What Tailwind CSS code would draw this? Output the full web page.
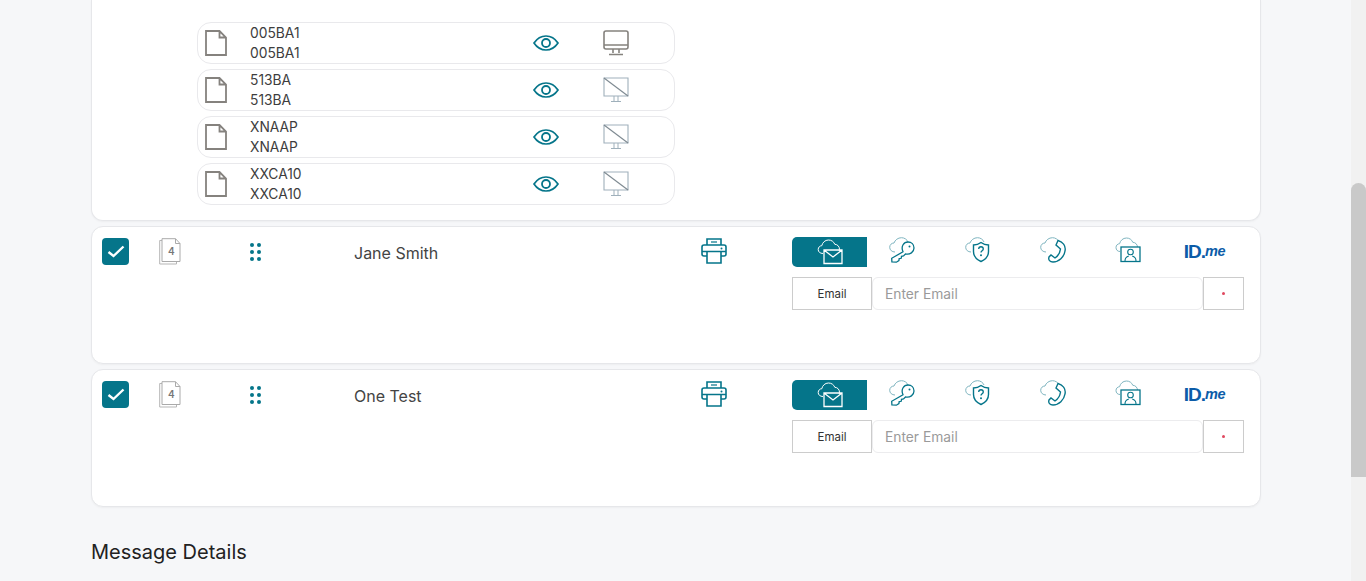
<!DOCTYPE html>
<html lang="en">
<head>
    <meta charset="UTF-8">
    <meta name="viewport" content="width=device-width, initial-scale=1.0">
    <title>Recipients</title>
    <script src="https://cdn.jsdelivr.net/npm/@tailwindcss/browser@4"></script>
</head>

<body class="h-[581px] overflow-hidden bg-[#f6f7f9] font-['Inter',sans-serif] text-[#333]">

    <svg class="hidden" xmlns="http://www.w3.org/2000/svg">
        <symbol id="file" viewBox="0 0 22 26">
            <path d="M1 1h13.500L21 7.500V25H1z M14.500 1v6.500H21" fill="none" stroke="#85827e" stroke-width="1.800"/>
        </symbol>
        <symbol id="eye" viewBox="0 0 26 16">
            <path d="M1 8C4 3.500 8 1 13 1s9 2.500 12 7c-3 4.500-7 7-12 7S4 12.500 1 8z" fill="none" stroke="#05758a" stroke-width="1.700"/>
            <circle cx="13" cy="8" r="4" fill="none" stroke="#05758a" stroke-width="1.800"/>
        </symbol>
        <symbol id="monitor" viewBox="0 0 26 26">
            <rect x="1" y="1" width="24" height="18" rx="2" fill="none" stroke="#85827e" stroke-width="1.600"/>
            <path d="M1 15h24M10 19v4M16 19v4M6 24.500h14" fill="none" stroke="#85827e" stroke-width="1.600"/>
        </symbol>
        <symbol id="monitor-off" viewBox="0 0 26 26">
            <path d="M1 1h24v18H1z" fill="none" stroke="#9fb0bb" stroke-width="1.100"/>
            <path d="M1 1l24 18" fill="none" stroke="#7f8a92" stroke-width="1.200"/>
            <path d="M11 19v5M15 19v5M8 24.500h10" fill="none" stroke="#9fb0bb" stroke-width="1"/>
        </symbol>
        <symbol id="pages" viewBox="0 0 22 27">
            <path d="M3 2.500H.700V26H17.500V24" fill="none" stroke="#b5b5b5" stroke-width="1"/>
            <path d="M3 .700h13.500L21 5.500V23.500H3z M16.500 .700V5.500H21" fill="#fff" stroke="#aaaaaa" stroke-width="1"/>
        </symbol>
        <symbol id="printer" viewBox="0 0 26 26">
            <path d="M6 7V1h14v6M6 18H3a2 2 0 0 1-2-2V9a2 2 0 0 1 2-2h20a2 2 0 0 1 2 2v7a2 2 0 0 1-2 2h-3M6 13.500h14V25H6zM1 13.500h24" fill="none" stroke="#05758a" stroke-width="1.600"/>
            <circle cx="20.500" cy="10.500" r="1" fill="#05758a"/>
            <path d="M10 4h6" stroke="#05758a" stroke-width="1.200"/>
        </symbol>
        <symbol id="cloud-mail" viewBox="0 0 26 26">
            <path d="M6 14.500C3 14.500 1.200 12.800 1.200 10.500c0-2.200 1.700-3.800 3.600-3.800C5.500 3.500 8 1 11.500 1c3 0 5.300 1.700 6.300 4.300 2.500.1 4.700 2 4.700 5 0 .6-.1 1.200-.3 1.700" fill="none" stroke="currentColor" stroke-width="1"/>
            <path d="M7 11h18v13.500H7z M7 11l9 7 9-7" fill="#05758a" stroke="currentColor" stroke-width="1.300"/>
        </symbol>
        <symbol id="cloud-key" viewBox="0 0 26 26">
            <path d="M6 15C3 15 .7 13 .7 10.300.7 7.800 2.600 6 5 6 6 3 9 .7 12.500.7c3 0 5.500 1.800 6.500 4.300" fill="none" stroke="#7fb5c0" stroke-width="1"/>
            <path d="M14 14.800C11.500 9 15 5 19 5c3.500 0 6 2.500 6 6 0 4-4 7-8.500 6L14.500 19l-2 .3-.3 2-2 .3-.3 2-2.500 1.600-4.500-.4-.2-3.500z" fill="#fff" stroke="currentColor" stroke-width="1.300"/>
            <circle cx="20.500" cy="9.500" r="1" fill="currentColor"/>
        </symbol>
        <symbol id="cloud-shield" viewBox="0 0 26 26">
            <path d="M6 15C3 15 .7 13 .7 10.300.7 7.800 2.600 6 5 6 6 3 9 .7 12.500.7c3 0 5.500 1.800 6.500 4.300" fill="none" stroke="#7fb5c0" stroke-width="1"/>
            <path d="M16 5.500c2 1.500 4.500 2.500 7.500 2.500v6.500c0 4.500-3 8-7.500 10-4.500-2-7.500-5.500-7.500-10V8c3 0 5.500-1 7.500-2.500z" fill="#fff" stroke="currentColor" stroke-width="1.400"/>
            <path d="M13.700 12c0-3 4.600-3 4.600 0 0 1.800-2.300 1.800-2.300 3.500" fill="none" stroke="currentColor" stroke-width="1.300"/>
            <circle cx="16" cy="18.300" r="1" fill="currentColor"/>
        </symbol>
        <symbol id="cloud-phone" viewBox="0 0 26 26">
            <path d="M6 15C3 15 .7 13 .7 10.300.7 7.800 2.600 6 5 6 6 3 9 .7 12.500.7c3 0 5.500 1.800 6.500 4.300" fill="none" stroke="#7fb5c0" stroke-width="1"/>
            <path d="M18 3.500C23 5 26 9 25 14c-1 6-6 11-12 11-3 0-5-2-4-5l2-2 4 3c3-2 5-5 5.500-9L16 8z" fill="#fff" stroke="currentColor" stroke-width="1.400"/>
        </symbol>
        <symbol id="cloud-person" viewBox="0 0 26 26">
            <path d="M5 14.500C2.500 14.500 1 12.800 1 10.500c0-2.200 1.700-3.800 3.600-3.800C5.300 3.500 8 1 11.500 1c3 0 5.300 1.700 6.300 4.300 2.500.1 4.700 2 4.700 5" fill="none" stroke="#7fb5c0" stroke-width="1"/>
            <rect x="6" y="10" width="19" height="14.500" fill="#fff" stroke="currentColor" stroke-width="1.300"/>
            <circle cx="15.500" cy="15" r="2.800" fill="none" stroke="currentColor" stroke-width="1.100"/>
            <path d="M10 24c0-3.500 2-4.500 3.800-5M21 24c0-3.500-2-4.500-3.800-5" fill="none" stroke="currentColor" stroke-width="1.100"/>
        </symbol>
    </svg>

    <div class="flex h-[581px]">
        <main class="w-[1351px] pl-[91px] pr-[90px]">

            <!-- open recipient, its top is scrolled away -->
            <section class="h-[221px] rounded-b-xl border-x border-b border-[#e6e7ea] bg-white pl-[105px] pt-[22px] shadow-[0_1px_2px_rgba(0,0,0,0.04)]">
                <div class="flex w-[478px] flex-col gap-[5px]">
                    <div class="flex h-[42px] items-center rounded-[14px] border border-[#e9e9ec] pl-[7px]">
                        <svg class="h-[26px] w-[22px]"><use href="#file"/></svg>
                        <div class="ml-[23px] w-[283px] text-[13.8px] leading-5 text-[#3d3d3d]"><p>005BA1</p><p>005BA1</p></div>
                        <svg class="h-4 w-[26px]"><use href="#eye"/></svg>
                        <svg class="ml-[44px] h-[26px] w-[26px]"><use href="#monitor"/></svg>
                    </div>
                    <div class="flex h-[42px] items-center rounded-[14px] border border-[#e9e9ec] pl-[7px]">
                        <svg class="h-[26px] w-[22px]"><use href="#file"/></svg>
                        <div class="ml-[23px] w-[283px] text-[13.8px] leading-5 text-[#3d3d3d]"><p>513BA</p><p>513BA</p></div>
                        <svg class="h-4 w-[26px]"><use href="#eye"/></svg>
                        <svg class="ml-[44px] h-[26px] w-[26px]"><use href="#monitor-off"/></svg>
                    </div>
                    <div class="flex h-[42px] items-center rounded-[14px] border border-[#e9e9ec] pl-[7px]">
                        <svg class="h-[26px] w-[22px]"><use href="#file"/></svg>
                        <div class="ml-[23px] w-[283px] text-[13.8px] leading-5 text-[#3d3d3d]"><p>XNAAP</p><p>XNAAP</p></div>
                        <svg class="h-4 w-[26px]"><use href="#eye"/></svg>
                        <svg class="ml-[44px] h-[26px] w-[26px]"><use href="#monitor-off"/></svg>
                    </div>
                    <div class="flex h-[42px] items-center rounded-[14px] border border-[#e9e9ec] pl-[7px]">
                        <svg class="h-[26px] w-[22px]"><use href="#file"/></svg>
                        <div class="ml-[23px] w-[283px] text-[13.8px] leading-5 text-[#3d3d3d]"><p>XXCA10</p><p>XXCA10</p></div>
                        <svg class="h-4 w-[26px]"><use href="#eye"/></svg>
                        <svg class="ml-[44px] h-[26px] w-[26px]"><use href="#monitor-off"/></svg>
                    </div>
                </div>
            </section>

            <section class="mt-[5px] flex h-[138px] rounded-xl border border-[#e6e7ea] bg-white pl-[10px] pt-[11px] shadow-[0_1px_2px_rgba(0,0,0,0.04)]">
                <span class="flex h-[27px] w-[27px] items-center justify-center rounded-[4px] bg-[#05758a]">
                    <svg class="h-[13px] w-[18px]" viewBox="0 0 18 13"><path d="M1.500 7 6.500 11 16.500 1.500" fill="none" stroke="#fff" stroke-width="2.400"/></svg>
                </span>
                <div class="relative ml-[31px] h-[27px] w-[22px] -translate-x-[1px]">
                    <svg class="h-[27px] w-[22px]"><use href="#pages"/></svg>
                    <span class="absolute left-[9px] top-[7px] text-[10px] leading-3 font-semibold text-[#777]">4</span>
                </div>
                <div class="ml-[68px] mt-[5px] grid h-[18px] w-[13px] grid-cols-2 content-between justify-between">
                    <i class="h-1 w-1 rounded-full bg-[#05758a]"></i><i class="h-1 w-1 rounded-full bg-[#05758a]"></i>
                    <i class="h-1 w-1 rounded-full bg-[#05758a]"></i><i class="h-1 w-1 rounded-full bg-[#05758a]"></i>
                    <i class="h-1 w-1 rounded-full bg-[#05758a]"></i><i class="h-1 w-1 rounded-full bg-[#05758a]"></i>
                </div>
                <p class="ml-[91px] mt-[5px] w-[347px] text-base leading-5 text-[#444]">Jane Smith</p>
                <svg class="h-[26px] w-[26px]"><use href="#printer"/></svg>
                <div class="ml-[65px] w-[452px] -mt-[1px]">
                    <div class="grid h-[30px] grid-cols-6 text-[#05758a]">
                        <span class="flex items-center justify-center rounded-l-[5px] bg-[#05758a] text-white"><svg class="h-[26px] w-[26px]"><use href="#cloud-mail"/></svg></span>
                        <span class="flex items-center justify-center pr-[6px]"><svg class="-mt-[4px] h-[26px] w-[26px]"><use href="#cloud-key"/></svg></span>
                        <span class="flex items-center justify-center pr-[5px]"><svg class="-mt-[4px] h-[26px] w-[26px]"><use href="#cloud-shield"/></svg></span>
                        <span class="flex items-center justify-center pr-[6px]"><svg class="-mt-[4px] h-[26px] w-[26px]"><use href="#cloud-phone"/></svg></span>
                        <span class="flex items-center justify-center pr-[5px]"><svg class="-mt-[4px] h-[26px] w-[26px]"><use href="#cloud-person"/></svg></span>
                        <span class="flex items-center justify-center pr-[4px] font-['Liberation_Sans',sans-serif] text-[#0b5ca8]"><b class="text-[19px] tracking-[-1px]">ID.</b><i class="text-[14.5px] font-bold tracking-[-0.5px]">me</i></span>
                    </div>
                    <div class="mt-[10px] flex h-[33px]">
                        <span class="flex w-[80px] items-center justify-center border border-[#cccccc] pt-[2px] text-[11.500px] text-[#333]">Email</span>
                        <span class="flex w-[331px] items-center rounded-md border border-[#ececee] pl-3 pt-[1px] text-[13.8px] text-[#9a9a9a]">Enter Email</span>
                        <span class="flex w-[41px] items-center justify-center border border-[#cccccc]"><i class="h-[3px] w-[3px] rounded-full bg-[#e0485f]"></i></span>
                    </div>
                </div>
            </section>

            <section class="mt-[5px] flex h-[138px] rounded-xl border border-[#e6e7ea] bg-white pl-[10px] pt-[11px] shadow-[0_1px_2px_rgba(0,0,0,0.04)]">
                <span class="flex h-[27px] w-[27px] items-center justify-center rounded-[4px] bg-[#05758a]">
                    <svg class="h-[13px] w-[18px]" viewBox="0 0 18 13"><path d="M1.500 7 6.500 11 16.500 1.500" fill="none" stroke="#fff" stroke-width="2.400"/></svg>
                </span>
                <div class="relative ml-[31px] h-[27px] w-[22px] -translate-x-[1px]">
                    <svg class="h-[27px] w-[22px]"><use href="#pages"/></svg>
                    <span class="absolute left-[9px] top-[7px] text-[10px] leading-3 font-semibold text-[#777]">4</span>
                </div>
                <div class="ml-[68px] mt-[5px] grid h-[18px] w-[13px] grid-cols-2 content-between justify-between">
                    <i class="h-1 w-1 rounded-full bg-[#05758a]"></i><i class="h-1 w-1 rounded-full bg-[#05758a]"></i>
                    <i class="h-1 w-1 rounded-full bg-[#05758a]"></i><i class="h-1 w-1 rounded-full bg-[#05758a]"></i>
                    <i class="h-1 w-1 rounded-full bg-[#05758a]"></i><i class="h-1 w-1 rounded-full bg-[#05758a]"></i>
                </div>
                <p class="ml-[91px] mt-[5px] w-[347px] text-base leading-5 text-[#444]">One Test</p>
                <svg class="h-[26px] w-[26px]"><use href="#printer"/></svg>
                <div class="ml-[65px] w-[452px] -mt-[1px]">
                    <div class="grid h-[30px] grid-cols-6 text-[#05758a]">
                        <span class="flex items-center justify-center rounded-l-[5px] bg-[#05758a] text-white"><svg class="h-[26px] w-[26px]"><use href="#cloud-mail"/></svg></span>
                        <span class="flex items-center justify-center pr-[6px]"><svg class="-mt-[4px] h-[26px] w-[26px]"><use href="#cloud-key"/></svg></span>
                        <span class="flex items-center justify-center pr-[5px]"><svg class="-mt-[4px] h-[26px] w-[26px]"><use href="#cloud-shield"/></svg></span>
                        <span class="flex items-center justify-center pr-[6px]"><svg class="-mt-[4px] h-[26px] w-[26px]"><use href="#cloud-phone"/></svg></span>
                        <span class="flex items-center justify-center pr-[5px]"><svg class="-mt-[4px] h-[26px] w-[26px]"><use href="#cloud-person"/></svg></span>
                        <span class="flex items-center justify-center pr-[4px] font-['Liberation_Sans',sans-serif] text-[#0b5ca8]"><b class="text-[19px] tracking-[-1px]">ID.</b><i class="text-[14.5px] font-bold tracking-[-0.5px]">me</i></span>
                    </div>
                    <div class="mt-[10px] flex h-[33px]">
                        <span class="flex w-[80px] items-center justify-center border border-[#cccccc] pt-[2px] text-[11.500px] text-[#333]">Email</span>
                        <span class="flex w-[331px] items-center rounded-md border border-[#ececee] pl-3 pt-[1px] text-[13.8px] text-[#9a9a9a]">Enter Email</span>
                        <span class="flex w-[41px] items-center justify-center border border-[#cccccc]"><i class="h-[3px] w-[3px] rounded-full bg-[#e0485f]"></i></span>
                    </div>
                </div>
            </section>

            <h2 class="mt-[33px] text-xl leading-6 text-[#222]">Message Details</h2>
        </main>

        <!-- page scrollbar -->
        <div class="w-[15px] bg-[#f1f1f1] pt-[183px]">
            <div class="h-[294px] rounded-t-lg bg-[#c9c9c9]"></div>
        </div>
    </div>

</body>
</html>
